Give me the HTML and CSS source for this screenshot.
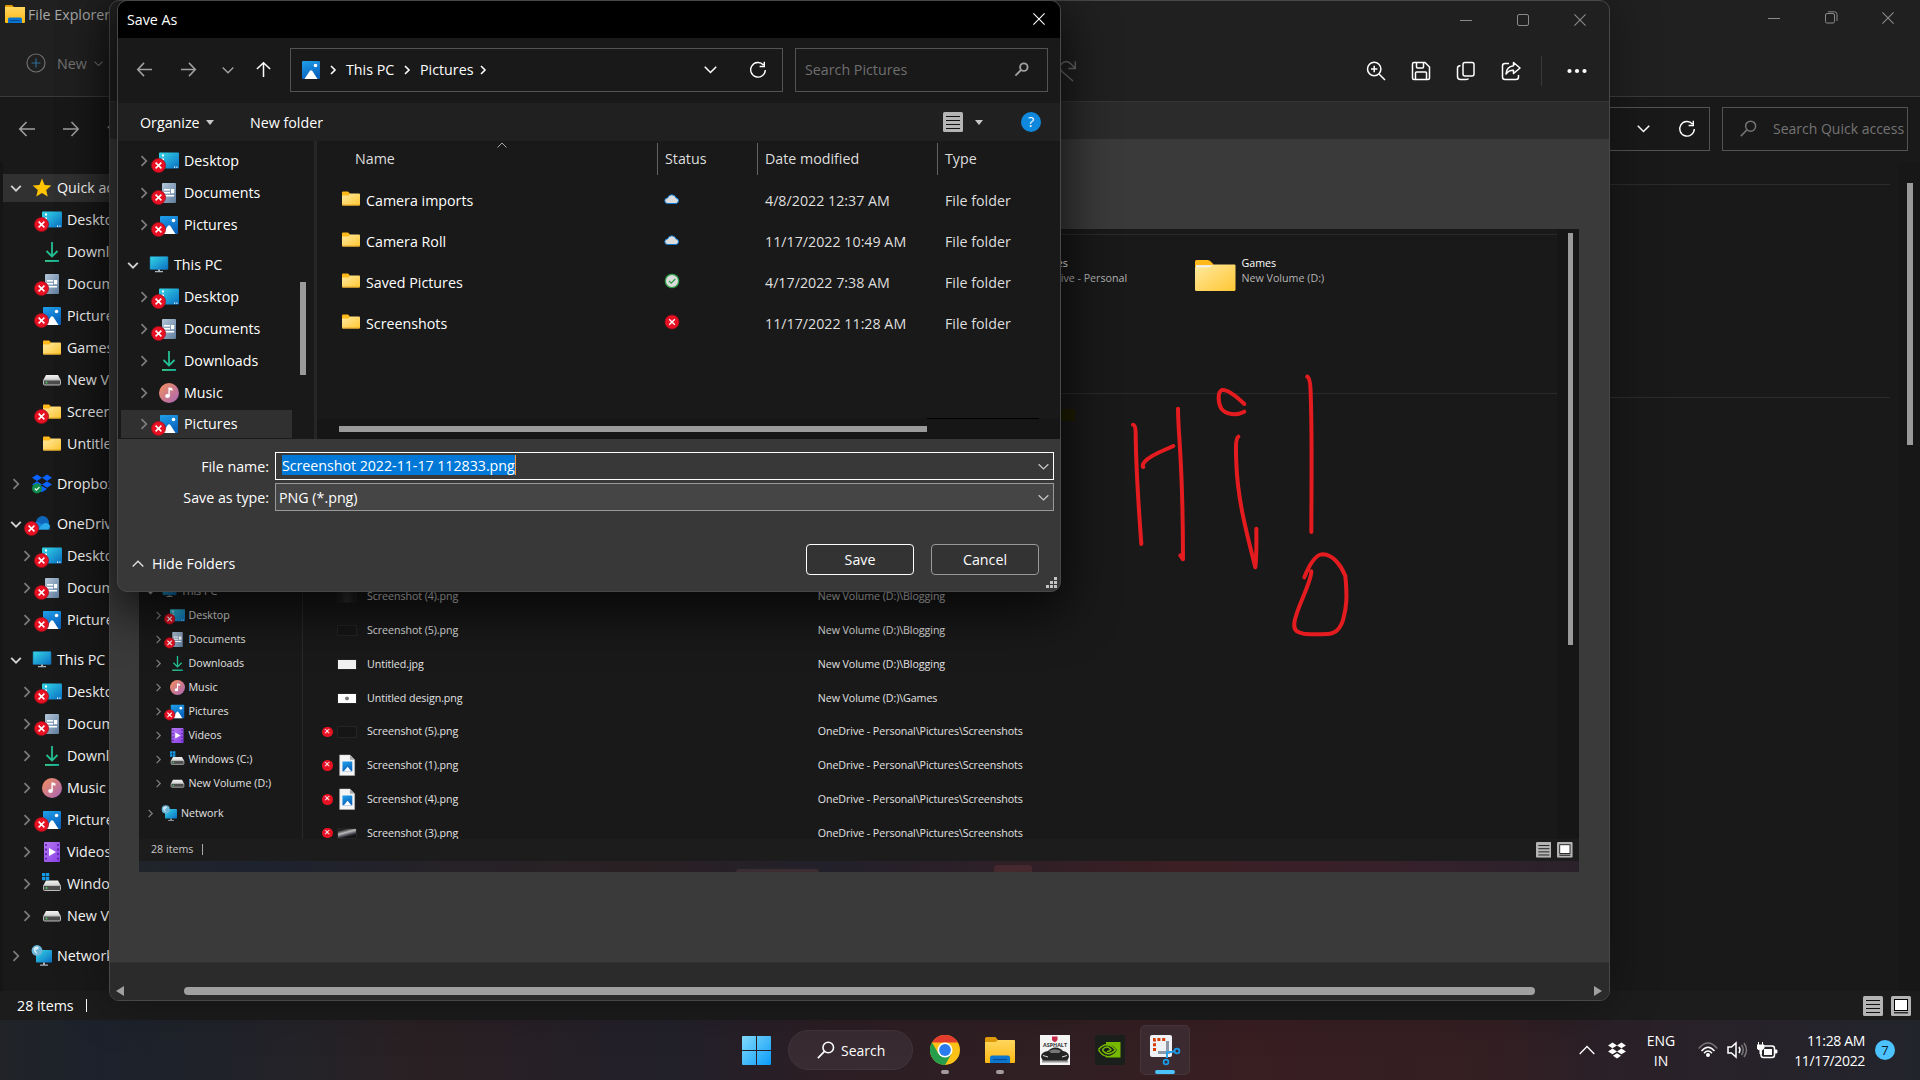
FILE: index.html
```html
<!DOCTYPE html>
<html lang="en">
<head>
<meta charset="utf-8">
<title>Save As</title>
<link rel="stylesheet" href="styles.css">
</head>
<body>
<svg class="defs" width="0" height="0">
  <defs>
    <linearGradient id="gBlue" x1="0" y1="0" x2="1" y2="1"><stop offset="0" stop-color="#35d6e6"/><stop offset="1" stop-color="#0a6fc4"/></linearGradient>
    <linearGradient id="gPic" x1="0" y1="0" x2="0.4" y2="1"><stop offset="0" stop-color="#1fa0ea"/><stop offset="1" stop-color="#0a63bd"/></linearGradient>
    <linearGradient id="gFold" x1="0" y1="0" x2="1" y2="1"><stop offset="0" stop-color="#ffe9a0"/><stop offset="1" stop-color="#ffc733"/></linearGradient>
    <linearGradient id="gDoc" x1="0" y1="0" x2="1" y2="1"><stop offset="0" stop-color="#b4c6da"/><stop offset="1" stop-color="#5f7d9d"/></linearGradient>
    <linearGradient id="gMus" x1="0" y1="0" x2="1" y2="1"><stop offset="0" stop-color="#f5915c"/><stop offset="1" stop-color="#a765b8"/></linearGradient>
    <linearGradient id="gVid" x1="0" y1="0" x2="1" y2="1"><stop offset="0" stop-color="#b679f3"/><stop offset="1" stop-color="#8a3fe6"/></linearGradient>
    <linearGradient id="gWin" x1="0" y1="0" x2="1" y2="1"><stop offset="0" stop-color="#84dfff"/><stop offset="1" stop-color="#0a9af8"/></linearGradient>
    <linearGradient id="gDown" x1="0" y1="0" x2="1" y2="0"><stop offset="0" stop-color="#3bc98a"/><stop offset="1" stop-color="#12b39c"/></linearGradient>
    <linearGradient id="gExp" x1="0" y1="0" x2="0" y2="1"><stop offset="0" stop-color="#ffd75e"/><stop offset="1" stop-color="#fdb813"/></linearGradient>
    <linearGradient id="gDrv" x1="0" y1="0" x2="0" y2="1"><stop offset="0" stop-color="#f2f2f2"/><stop offset="1" stop-color="#cfcfcf"/></linearGradient>
  </defs>
  <symbol id="right" viewBox="0 0 12 12" overflow="visible"><path d="M3.5 1.2 8.3 6l-4.8 4.8" fill="none" stroke="#7f7f7f" stroke-width="1.7"/></symbol>
  <symbol id="down" viewBox="0 0 12 12" overflow="visible"><path d="M1.2 3.8 6 8.6l4.800-4.800" fill="none" stroke="#d0d0d0" stroke-width="1.9"/></symbol>
  <symbol id="err" viewBox="0 0 20 20" overflow="visible"><circle cx="-.5" cy="14.5" r="7" fill="#e81123" stroke="#9c0c1c" stroke-width=".8"/><path d="m-3.400 11.600 5.800 5.800m0-5.800-5.800 5.800" stroke="#fff" stroke-width="1.500"/></symbol>
  <symbol id="desktop" viewBox="0 0 20 20" overflow="visible"><rect y="1.500" width="20" height="16" rx="1" fill="url(#gBlue)"/><path d="M3 3.500h2v2H3zm0 4h2v2H3z" fill="#fff"/><path d="M15 15.500h1.200v1.200H15zm2.300 0h1.200v1.200h-1.200z" fill="#fff"/></symbol>
  <symbol id="docs" viewBox="0 0 20 20"><rect x="3" width="14" height="20" rx="1" fill="url(#gDoc)"/><path d="M5 6h6v1.400H5zm0 3h6v1.400H5zm0 3h10v1.400H5z" fill="#fff"/><path d="M12 6h3.200v4.200H12z" fill="#fff"/></symbol>
  <symbol id="pics" viewBox="0 0 20 20"><rect x="1" y="1" width="18" height="18" rx="1" fill="url(#gPic)"/><path d="m3.500 19 5.400-8.200q1.100-1.300 2.300 0L16.500 19z" fill="#fff"/><circle cx="14.500" cy="5.500" r="1.800" fill="#fff"/></symbol>
  <symbol id="dl" viewBox="0 0 20 20"><path d="M10 0v13M4.500 9 10 14.500 15.500 9" fill="none" stroke="#23bf93" stroke-width="1.800"/><path d="M3 18h14v1.900H3z" fill="url(#gDown)"/></symbol>
  <symbol id="music" viewBox="0 0 20 20"><circle cx="10" cy="10" r="10" fill="url(#gMus)"/><ellipse cx="8.500" cy="13" rx="2.300" ry="2" fill="#fff"/><path d="M9.400 13V4.500h1.300q1 0 2.800 1v2.300l-2.700-.8v6z" fill="#fff"/></symbol>
  <symbol id="video" viewBox="0 0 20 20"><rect x="2" width="16" height="20" rx="1" fill="url(#gVid)"/><path d="M7 6v8l7-4z" fill="#fff"/><path d="M4 2v17M16 2v17" stroke="#4c1c96" stroke-width="1.600" stroke-dasharray="1.800 2.800"/></symbol>
  <symbol id="folder" viewBox="0 0 20 20"><path d="M1 3.500q0-1 1-1h5l2 2V8H1z" fill="#ffb91a"/><path d="M1 6.500h6.500l1.700-2H18q1 0 1 1v10q0 1-1 1H2q-1 0-1-1z" fill="url(#gFold)"/><path d="M1 15.500h18q0 1-1 1H2q-1 0-1-1z" fill="#e8a824"/></symbol>
  <symbol id="drive" viewBox="0 0 20 20"><path d="M4 5h12l3 5.500H1z" fill="url(#gDrv)"/><rect x="1.500" y="10" width="17" height="5" rx="1" fill="#4c4c4c" stroke="#bdbdbd"/><circle cx="4.500" cy="12.500" r=".9" fill="#3ddc5a"/></symbol>
  <symbol id="windrive" viewBox="0 0 20 20" overflow="visible"><use href="#drive" y="1.500"/><path d="M0-1h3.300v3.300H0zm3.900 0h3.300v3.300H3.900zM0 2.900h3.300v3.300H0zm3.900 0h3.300v3.300H3.900z" fill="#149ae8"/></symbol>
  <symbol id="pc" viewBox="0 0 20 20"><rect x="1" y="1.500" width="18" height="13" rx=".8" fill="url(#gBlue)" stroke="#1c6f9f" stroke-width=".6"/><path d="M9 14.500h2v1.500h3v1.300H6V16h3z" fill="#a9b4bd"/></symbol>
  <symbol id="net" viewBox="0 0 20 20" overflow="visible"><rect x="4" y="4" width="16" height="12.500" rx=".8" fill="url(#gBlue)"/><path d="M11 16.500h2v2h3v1.300H8v-1.300h3z" fill="#a9b4bd"/><circle cx="5" cy="4.500" r="5.400" fill="#6db5d8"/><path d="M1.500 2.500Q5-1 7 2L4.500 4 3 3.500 5.500 8Q2 7 1.500 2.500z" fill="#d6eef8"/></symbol>
  <symbol id="star" viewBox="0 0 20 20"><path d="m10 .6 2.600 6.300 6.700.6-5.100 4.400 1.500 6.600L10 15l-5.700 3.500 1.500-6.600L.7 7.500l6.700-.6z" fill="#ffc300"/></symbol>
  <symbol id="dbx" viewBox="0 0 20 20"><path d="M5 0.500 10 3.800 5 7 0 3.800zM15 .5l5 3.300L15 7l-5-3.200zM5 7.300l5 3.200-5 3.300-5-3.300zM15 7.300l5 3.200-5 3.300-5-3.300zM10 12l5 3-5 3.300L5 15z" fill="#0a62ff"/></symbol>
  <symbol id="okb" viewBox="0 0 20 20"><circle cx="5" cy="14.500" r="5" fill="#0f8b4c"/><path d="m2.800 14.500 1.600 1.600 3-3" fill="none" stroke="#fff" stroke-width="1.200"/></symbol>
  <symbol id="od" viewBox="0 0 20 20"><circle cx="10.500" cy="8.500" r="6.500" fill="#0f66b8"/><path d="M1 15.500a4 4 0 0 1 1-6.500 5 5 0 0 1 5-.5l12 7z" fill="#1583d8"/><path d="M6 15.500 11 10a5 5 0 0 1 5-.6 3.300 3.300 0 0 1 0 6.100z" fill="#29a8ea"/></symbol>
  <symbol id="refresh" viewBox="0 0 20 20"><path d="M15.500 5A7.300 7.300 0 1 0 17.300 10M16.300 1.800v4.700h-4.700" fill="none" stroke="currentColor" stroke-width="1.400"/></symbol>
  <symbol id="back" viewBox="0 0 18 18"><path d="M17 9H2m6.500-7L1.800 9l6.700 7" fill="none" stroke="currentColor" stroke-width="1.600"/></symbol>
  <symbol id="chev" viewBox="0 0 12 12"><path d="m.7 3.500 5.300 5.200 5.300-5.200" fill="none" stroke="currentColor" stroke-width="1.400"/></symbol>
  <symbol id="mag" viewBox="0 0 16 16"><circle cx="10" cy="5.800" r="4.700" fill="none" stroke="currentColor" stroke-width="1.400"/><path d="m6.600 9.200-5.800 6" stroke="currentColor" stroke-width="1.500"/></symbol>
  <symbol id="magb" viewBox="0 0 16 16"><circle cx="10.500" cy="5.500" r="4" fill="none" stroke="currentColor" stroke-width="2"/><path d="m7.500 8.500-6 6" stroke="currentColor" stroke-width="2"/></symbol>
  <symbol id="listv" viewBox="0 0 20 20"><rect width="20" height="20" rx="1.500" fill="#b4b4b4"/><path d="M3 4.500h14M3 8.500h14M3 12.500h14M3 16.500h14" stroke="#111" stroke-width="1.100"/></symbol>
  <symbol id="bigv" viewBox="0 0 20 20"><rect width="20" height="20" rx="1.500" fill="#b4b4b4"/><rect x="3.500" y="3.500" width="13" height="11" fill="#fff" stroke="#000"/><path d="M3 16.800h14" stroke="#000" stroke-width="1.100"/></symbol>
  <symbol id="x" viewBox="0 0 12 12"><path d="m.4.400 11.200 11.200m0-11.200L.4 11.600" stroke="currentColor" stroke-width="1.100"/></symbol>
  <symbol id="cloud" viewBox="0 0 16 16"><path d="M3.500 12.500a2.800 2.800 0 0 1 .2-5.600 4.300 4.300 0 0 1 8.200-.1 2.900 2.900 0 0 1 .4 5.700z" fill="#dcdcdc" stroke="#0a78d6"/></symbol>
  <symbol id="pngf" viewBox="0 0 20 24"><path d="M2 1h11l5 5v17H2z" fill="#f5f5f5" stroke="#bbb" stroke-width=".5"/><path d="M13 1v5h5z" fill="#aaa"/><rect x="5" y="8" width="10.500" height="10.500" fill="url(#gPic)"/><path d="m6.500 18.500 4-5 4 5z" fill="#fff"/></symbol>
</svg>

<main class="desk">
  <section class="explorer">
    <header class="ex-top">
      <div class="ex-title">
        <svg width="20" height="20" viewBox="0 0 20 20"><path d="M0 2q0-1 1-1h6l2 2H0z" fill="#e09c00"/><path d="M0 3h20v15q0 1-1 1H1q-1 0-1-1z" fill="url(#gExp)"/><path d="M3 19v-4q0-1.500 1.500-1.500h11Q17 13.500 17 15v4z" fill="#0a75cf"/><path d="M5 16.500h10" stroke="#0a4a92"/></svg>
        <span>File Explorer</span>
        <div class="wctl ex-wctl">
          <svg width="12" height="12"><path d="M0 6.500h12" stroke="currentColor"/></svg>
          <svg width="13" height="13"><rect x=".5" y="2.500" width="9" height="9.500" rx="1.500" fill="none" stroke="currentColor"/><path d="M3 .8h6.500q2.500 0 2.500 2.500V10" fill="none" stroke="currentColor"/></svg>
          <svg width="12" height="12"><use href="#x"/></svg>
        </div>
      </div>
      <div class="ex-new">
        <svg width="20" height="20"><circle cx="10" cy="10" r="9" fill="none" stroke="#6f6f6f" stroke-width="1.200"/><path d="M10 5.500v9M5.500 10h9" stroke="#2f6d94" stroke-width="1.200"/></svg>
        <span>New</span>
        <svg width="9" height="9"><use href="#chev"/></svg>
      </div>
    </header>
    <div class="ex-nav">
      <svg class="g" width="18" height="18"><use href="#back"/></svg>
      <svg class="g flip" width="18" height="18"><use href="#back"/></svg>
      <svg class="g" width="12" height="12"><use href="#chev"/></svg>
      <div class="box ex-addr"><svg width="13" height="13"><use href="#chev"/></svg><svg width="20" height="20"><use href="#refresh"/></svg></div>
      <div class="box ex-search"><svg width="17" height="17"><use href="#mag"/></svg><span>Search Quick access</span></div>
    </div>
    <div class="ex-body">
      <nav class="tree ex-tree">
        <div class="row head sel"><svg class="ch"><use href="#down"/></svg><svg class="ic"><use href="#star"/></svg>Quick access</div>
        <div class="row"><i class="ch"></i><svg class="ic"><use href="#desktop"/><use href="#err"/></svg>Desktop</div>
        <div class="row"><i class="ch"></i><svg class="ic"><use href="#dl"/></svg>Downloads</div>
        <div class="row"><i class="ch"></i><svg class="ic"><use href="#docs"/><use href="#err"/></svg>Documents</div>
        <div class="row"><i class="ch"></i><svg class="ic"><use href="#pics"/><use href="#err"/></svg>Pictures</div>
        <div class="row"><i class="ch"></i><svg class="ic"><use href="#folder"/></svg>Games</div>
        <div class="row"><i class="ch"></i><svg class="ic"><use href="#drive"/></svg>New Volume (D:)</div>
        <div class="row"><i class="ch"></i><svg class="ic"><use href="#folder"/><use href="#err"/></svg>Screenshots</div>
        <div class="row"><i class="ch"></i><svg class="ic"><use href="#folder"/></svg>Untitled</div>
        <div class="row head"><svg class="ch"><use href="#right"/></svg><svg class="ic"><use href="#dbx"/><use href="#okb"/></svg>Dropbox</div>
        <div class="row head"><svg class="ch"><use href="#down"/></svg><svg class="ic"><use href="#od"/><use href="#err"/></svg>OneDrive</div>
        <div class="row"><svg class="ch"><use href="#right"/></svg><svg class="ic"><use href="#desktop"/><use href="#err"/></svg>Desktop</div>
        <div class="row"><svg class="ch"><use href="#right"/></svg><svg class="ic"><use href="#docs"/><use href="#err"/></svg>Documents</div>
        <div class="row"><svg class="ch"><use href="#right"/></svg><svg class="ic"><use href="#pics"/><use href="#err"/></svg>Pictures</div>
        <div class="row head"><svg class="ch"><use href="#down"/></svg><svg class="ic"><use href="#pc"/></svg>This PC</div>
        <div class="row"><svg class="ch"><use href="#right"/></svg><svg class="ic"><use href="#desktop"/><use href="#err"/></svg>Desktop</div>
        <div class="row"><svg class="ch"><use href="#right"/></svg><svg class="ic"><use href="#docs"/><use href="#err"/></svg>Documents</div>
        <div class="row"><svg class="ch"><use href="#right"/></svg><svg class="ic"><use href="#dl"/></svg>Downloads</div>
        <div class="row"><svg class="ch"><use href="#right"/></svg><svg class="ic"><use href="#music"/></svg>Music</div>
        <div class="row"><svg class="ch"><use href="#right"/></svg><svg class="ic"><use href="#pics"/><use href="#err"/></svg>Pictures</div>
        <div class="row"><svg class="ch"><use href="#right"/></svg><svg class="ic"><use href="#video"/></svg>Videos</div>
        <div class="row"><svg class="ch"><use href="#right"/></svg><svg class="ic"><use href="#windrive"/></svg>Windows (C:)</div>
        <div class="row"><svg class="ch"><use href="#right"/></svg><svg class="ic"><use href="#drive"/></svg>New Volume (D:)</div>
        <div class="row head"><svg class="ch"><use href="#right"/></svg><svg class="ic"><use href="#net"/></svg>Network</div>
      </nav>
      <div class="ex-main"><hr><hr></div>
      <div class="ex-scroll"><i></i></div>
    </div>
    <footer class="status"><span>28 items</span><i></i><div class="views"><svg width="20" height="20"><use href="#listv"/></svg><svg width="20" height="20"><use href="#bigv"/></svg></div></footer>
  </section>

  <section class="snip">
    <header class="sn-top">
      <div class="wctl sn-wctl">
        <svg width="12" height="12"><path d="M0 6.500h12" stroke="currentColor"/></svg>
        <svg width="12" height="12"><rect x=".5" y=".5" width="11" height="11" rx="1.500" fill="none" stroke="currentColor"/></svg>
        <svg width="12" height="12"><use href="#x"/></svg>
      </div>
      <div class="sn-tools">
        <svg class="redo" width="22" height="22" viewBox="0 0 22 22"><path d="M17 21 6 11.500Q2 7 6 3.500q4-4 8.500 0L19 8M19.300 1.500v7h-7" fill="none" stroke="#6a6a6a" stroke-width="1.400"/></svg>
        <svg width="20" height="20" fill="none" stroke="#fff" stroke-width="1.500"><circle cx="8.200" cy="8" r="6.700"/><path d="m13 13 6 6M8.200 4.800v6.400M5 8h6.400"/></svg>
        <svg width="20" height="20" fill="none" stroke="#fff" stroke-width="1.500"><path d="M3 1.500h11L18.500 6v11q0 1.500-1.500 1.500H3q-1.500 0-1.500-1.500V3Q1.500 1.500 3 1.500zM5.500 1.500V6q0 1 1 1h5q1 0 1-1V1.500M4.500 18.500V12q0-1 1-1h9q1 0 1 1v6.500"/></svg>
        <svg width="20" height="20" fill="none" stroke="#fff" stroke-width="1.500"><rect x="7" y="1.500" width="11" height="13.500" rx="2"/><path d="M4.500 4.500Q1.500 5 1.500 7v8.500q0 3 3 3H10q2 0 2.500-1"/></svg>
        <svg width="20" height="20" fill="none" stroke="#fff" stroke-width="1.500" stroke-linejoin="round"><path d="M8 2.500H4Q1.500 2.500 1.500 5v11q0 2.500 2.500 2.500h11q2.500 0 2.500-2.500v-2"/><path d="M12.500 1.500 19 7l-6.500 5.500V9.300Q8 9 5 13q.5-7.500 7.500-8.300z"/></svg>
        <i></i>
        <svg width="20" height="20" fill="#fff"><circle cx="2.500" cy="10" r="2.100"/><circle cx="10" cy="10" r="2.100"/><circle cx="17.500" cy="10" r="2.100"/></svg>
      </div>
    </header>
    <div class="sn-strip"></div>
    <div class="sn-canvas">
      <div class="shot">
        <div class="sh-main">
          <nav class="tree sh-tree">
            <div class="row head"><svg class="ch"><use href="#down"/></svg><svg class="ic"><use href="#pc"/></svg>This PC</div>
            <div class="row"><svg class="ch"><use href="#right"/></svg><svg class="ic"><use href="#desktop"/><use href="#err"/></svg>Desktop</div>
            <div class="row"><svg class="ch"><use href="#right"/></svg><svg class="ic"><use href="#docs"/><use href="#err"/></svg>Documents</div>
            <div class="row"><svg class="ch"><use href="#right"/></svg><svg class="ic"><use href="#dl"/></svg>Downloads</div>
            <div class="row"><svg class="ch"><use href="#right"/></svg><svg class="ic"><use href="#music"/></svg>Music</div>
            <div class="row"><svg class="ch"><use href="#right"/></svg><svg class="ic"><use href="#pics"/><use href="#err"/></svg>Pictures</div>
            <div class="row"><svg class="ch"><use href="#right"/></svg><svg class="ic"><use href="#video"/></svg>Videos</div>
            <div class="row"><svg class="ch"><use href="#right"/></svg><svg class="ic"><use href="#windrive"/></svg>Windows (C:)</div>
            <div class="row"><svg class="ch"><use href="#right"/></svg><svg class="ic"><use href="#drive"/></svg>New Volume (D:)</div>
            <div class="row head"><svg class="ch"><use href="#right"/></svg><svg class="ic"><use href="#net"/></svg>Network</div>
          </nav>
          <div class="sh-content">
            <div class="tiles">
              <div class="tile"><svg width="54" height="42" viewBox="0 0 40 31"><use href="#pics"/></svg><p><b>Pictures</b><br>OneDrive - Personal</p></div>
              <div class="tile"><svg width="54" height="42" viewBox="0 0 40 31"><path d="M0 1.500Q0 0 1.500 0h11q2 0 3 1.500L18 4v6H0z" fill="#ffb91a"/><path d="M1 5h17v4H1z" fill="#f1f1f1"/><path d="M0 7h15l3-2.700h21q1 0 1 1V29q0 1.500-1.500 1.500h-37Q0 30.500 0 29z" fill="url(#gFold)"/></svg><p><b>Games</b><br>New Volume (D:)</p></div>
            </div>
            <div class="mark"></div>
            <div class="files">
              <div class="file"><i></i><span class="th t4"></span><span>Screenshot (4).png</span><span>New Volume (D:)\Blogging</span></div>
              <div class="file"><i></i><span class="th"></span><span>Screenshot (5).png</span><span>New Volume (D:)\Blogging</span></div>
              <div class="file"><i></i><span class="th w"></span><span>Untitled.jpg</span><span>New Volume (D:)\Blogging</span></div>
              <div class="file"><i></i><span class="th w dot"></span><span>Untitled design.png</span><span>New Volume (D:)\Games</span></div>
              <div class="file"><i class="e">×</i><span class="th"></span><span>Screenshot (5).png</span><span>OneDrive - Personal\Pictures\Screenshots</span></div>
              <div class="file"><i class="e">×</i><svg width="27" height="30" viewBox="0 0 20 24"><use href="#pngf"/></svg><span>Screenshot (1).png</span><span>OneDrive - Personal\Pictures\Screenshots</span></div>
              <div class="file"><i class="e">×</i><svg width="27" height="30" viewBox="0 0 20 24"><use href="#pngf"/></svg><span>Screenshot (4).png</span><span>OneDrive - Personal\Pictures\Screenshots</span></div>
              <div class="file"><i class="e">×</i><span class="th car"></span><span>Screenshot (3).png</span><span>OneDrive - Personal\Pictures\Screenshots</span></div>
            </div>
          </div>
          <div class="sh-scroll"><i></i></div>
        </div>
        <footer class="status sh-status"><span>28 items</span><i></i><div class="views"><svg width="21" height="21"><use href="#listv"/></svg><svg width="21" height="21"><use href="#bigv"/></svg></div></footer>
        <div class="sh-task"><i></i><i></i></div>
      </div>
      <svg class="ink" width="220" height="270" viewBox="150 450 660 810" fill="none" stroke="#e51c1f" stroke-width="12" stroke-linecap="round" stroke-linejoin="round">
        <path d="M159 614Q167 616 167 640C168 760 176 860 184 972"/>
        <path d="M190 741Q184 736 196 723C220 700 250 693 280 678"/>
        <path d="M294 566C295 660 309 720 309 1018L301 1006"/>
        <path d="M493 552C460 520 438 508 426 510C412 516 414 550 424 566C438 585 470 587 493 575"/>
        <path d="M475 650C465 655 468 700 469 730C473 840 500 940 526 1042Q530 1010 529 926"/>
        <path d="M682 470Q691 474 692 520C697 660 694 800 694 936"/>
        <path d="M673 1072C690 1030 708 1003 728 1003C762 1004 785 1040 796 1068C802 1130 800 1160 790 1196C782 1226 768 1241 742 1242Q700 1244 670 1241C646 1236 641 1228 643 1208C650 1160 694 1090 694 1054"/>
      </svg>
    </div>
    <footer class="sn-foot">
      <svg width="8" height="10"><path d="M8 0v10L0 5z" fill="#a0a0a0"/></svg><i></i><svg width="8" height="10"><path d="M0 0v10l8-5z" fill="#a0a0a0"/></svg>
    </footer>
  </section>

  <section class="dialog">
    <header class="dg-title"><span>Save As</span><svg width="12" height="12"><use href="#x"/></svg></header>
    <div class="dg-nav">
      <svg class="g" width="17" height="17"><use href="#back"/></svg>
      <svg class="g flip" width="17" height="17"><use href="#back"/></svg>
      <svg class="g" width="12" height="12"><use href="#chev"/></svg>
      <svg class="up" width="17" height="17"><use href="#back"/></svg>
      <div class="box dg-addr">
        <svg width="20" height="20"><use href="#pics"/></svg>
        <svg class="sep" width="8" height="10"><path d="m2 1 4 4-4 4" fill="none" stroke="#fff" stroke-width="1.600"/></svg>
        <span class="c1">This PC</span>
        <svg class="sep" width="8" height="10"><path d="m2 1 4 4-4 4" fill="none" stroke="#fff" stroke-width="1.600"/></svg>
        <span class="c2">Pictures</span>
        <svg class="sep" width="8" height="10"><path d="m2 1 4 4-4 4" fill="none" stroke="#fff" stroke-width="1.600"/></svg>
        <svg class="dd" width="13" height="13"><use href="#chev"/></svg>
        <svg class="rf" width="20" height="20"><use href="#refresh"/></svg>
      </div>
      <div class="box dg-search"><span>Search Pictures</span><svg width="15" height="15"><use href="#magb"/></svg></div>
    </div>
    <div class="dg-cmd">
      <span class="org">Organize</span><i class="caret"></i><span class="nf">New folder</span>
      <svg class="lv" width="20" height="20"><use href="#listv"/></svg><i class="caret"></i><span class="help">?</span>
    </div>
    <div class="dg-body">
      <nav class="tree dg-tree">
        <div class="row"><svg class="ch"><use href="#right"/></svg><svg class="ic"><use href="#desktop"/><use href="#err"/></svg>Desktop</div>
        <div class="row"><svg class="ch"><use href="#right"/></svg><svg class="ic"><use href="#docs"/><use href="#err"/></svg>Documents</div>
        <div class="row"><svg class="ch"><use href="#right"/></svg><svg class="ic"><use href="#pics"/><use href="#err"/></svg>Pictures</div>
        <div class="row head"><svg class="ch"><use href="#down"/></svg><svg class="ic"><use href="#pc"/></svg>This PC</div>
        <div class="row"><svg class="ch"><use href="#right"/></svg><svg class="ic"><use href="#desktop"/><use href="#err"/></svg>Desktop</div>
        <div class="row"><svg class="ch"><use href="#right"/></svg><svg class="ic"><use href="#docs"/><use href="#err"/></svg>Documents</div>
        <div class="row"><svg class="ch"><use href="#right"/></svg><svg class="ic"><use href="#dl"/></svg>Downloads</div>
        <div class="row"><svg class="ch"><use href="#right"/></svg><svg class="ic"><use href="#music"/></svg>Music</div>
        <div class="row sel"><svg class="ch"><use href="#right"/></svg><svg class="ic"><use href="#pics"/><use href="#err"/></svg>Pictures</div>
      </nav>
      <div class="dg-vscroll"><i></i></div>
      <div class="dg-list">
        <div class="cols"><span>Name<svg class="sort" width="10" height="6"><path d="m.5 5.500 4.500-4.500 4.500 4.500" fill="none" stroke="#aaa"/></svg></span><span>Status</span><span>Date modified</span><span>Type</span></div>
        <div class="item"><span><svg width="20" height="20"><use href="#folder"/></svg>Camera imports</span><span><svg width="16" height="16"><use href="#cloud"/></svg></span><span>4/8/2022 12:37 AM</span><span>File folder</span></div>
        <div class="item"><span><svg width="20" height="20"><use href="#folder"/></svg>Camera Roll</span><span><svg width="16" height="16"><use href="#cloud"/></svg></span><span>11/17/2022 10:49 AM</span><span>File folder</span></div>
        <div class="item"><span><svg width="20" height="20"><use href="#folder"/></svg>Saved Pictures</span><span><svg width="16" height="16"><circle cx="8" cy="8" r="6.700" fill="#dcdcdc" stroke="#2f9c46" stroke-width="1.300"/><path d="m5 8 2.200 2.200L11.300 6" fill="none" stroke="#2f9c46" stroke-width="1.300"/></svg></span><span>4/17/2022 7:38 AM</span><span>File folder</span></div>
        <div class="item"><span><svg width="20" height="20"><use href="#folder"/></svg>Screenshots</span><span><svg width="16" height="16"><circle cx="8" cy="8" r="7" fill="#e81123" stroke="#9c0c1c" stroke-width=".8"/><path d="m5.200 5.200 5.600 5.600m0-5.600-5.600 5.600" stroke="#fff" stroke-width="1.400"/></svg></span><span>11/17/2022 11:28 AM</span><span>File folder</span></div>
        <div class="dg-hscroll"><i></i><b></b></div>
      </div>
    </div>
    <div class="dg-form">
      <label>File name:</label><div class="field name"><mark>Screenshot 2022-11-17 112833.png</mark><svg width="11" height="11"><use href="#chev"/></svg></div>
      <label>Save as type:</label><div class="field type"><span>PNG (*.png)</span><svg width="11" height="11"><use href="#chev"/></svg></div>
    </div>
    <footer class="dg-foot">
      <svg class="hide" width="12" height="12"><use href="#chev"/></svg><span>Hide Folders</span>
      <button class="btn save">Save</button><button class="btn">Cancel</button>
    </footer>
    <svg class="grip" width="11" height="11" fill="#c4c4c4"><path d="M8 0h3v3H8zM4 4h3v3H4zM8 4h3v3H8zM0 8h3v3H0zM4 8h3v3H4zM8 8h3v3H8z"/></svg>
  </section>

  <footer class="taskbar">
    <div class="apps">
      <svg class="start" width="29" height="29"><path d="M0 1q0-1 1-1h13v14H0zM15 0h13q1 0 1 1v13H15zM0 15h14v14H1q-1 0-1-1zM15 15h14v13q0 1-1 1H15z" fill="url(#gWin)"/></svg>
      <div class="pill"><svg width="18" height="18"><use href="#mag"/></svg><span>Search</span></div>
      <div class="app run"><svg width="30" height="30" viewBox="-15 -15 30 30"><circle r="15" fill="#fbc116"/><path d="M0-7.500H13A15 15 0 0 0-13-7.500z" fill="#e33b2e"/><path d="M-13-7.500A15 15 0 0 0 0 15L6.500 3.700-6.500 3.700z" fill="#259d4b"/><circle r="7.500" fill="#fff"/><circle r="5.900" fill="#2a7bee"/></svg></div>
      <div class="app run"><svg width="30" height="28" viewBox="0 0 30 28"><path d="M0 2.500Q0 1 1.500 1h9L13 4v3H0z" fill="#dd9a08"/><path d="M0 6h10.500L13 4h16q1 0 1 1v21q0 1-1 1H1q-1 0-1-1z" fill="url(#gExp)"/><path d="M5 27v-5.500q0-2 2-2h16q2 0 2 2V27z" fill="#0b78d0"/><path d="M8 23.500h14" stroke="#0a4a92" stroke-width="1.200"/></svg></div>
      <div class="app"><svg width="30" height="30" viewBox="0 0 30 30"><path d="M0 0h30v30H0z" fill="#f4f4f4"/><path d="M12 1.500h5.500v3.500q-1 1.500-2.700 2.200Q13 6.500 12 5z" fill="#c32a45"/><text x="15" y="11.500" text-anchor="middle" font-size="5.200" font-weight="700" textLength="24" lengthAdjust="spacingAndGlyphs" fill="#333">ASPHALT</text><path d="M1 22q0-5 7-6 3-3.500 7.500-3.500T23 16q6 1 6 6l-2 4H3z" fill="#242424"/><path d="M9 16q6-3.500 12 0l-2 2h-8z" fill="#777"/><path d="M3 20.500l5 1.500M27 20.500l-5 1.500" stroke="#ddd"/><path d="M2 26.500h26" stroke="#999" stroke-width="2"/></svg></div>
      <div class="app"><svg width="30" height="30" viewBox="0 0 30 30"><path d="M0 0h30v30H0z" fill="#1b1f1b"/><path d="M11 7h14.500v15.500H11z" fill="#76b900"/><path d="M3.500 14.500Q10 6.500 18 11l4 4q-4 6-10 6-6-1-8.500-6.500z" fill="#1b1f1b"/><path d="M3.500 14.500Q10 7 17 11.500l3.500 3.500Q16 19.500 12 18.500q-4-1.500-4.500-4 3-3.500 6-2.200l2.500 2.500q-2 2.200-4 1.400M3.500 14.500Q6 20 12 21.500" fill="none" stroke="#76b900" stroke-width="1.500"/></svg></div>
      <div class="app run active"><svg width="30" height="30" viewBox="0 0 30 30" overflow="visible"><rect width="22" height="22" rx="2" fill="#eef1f5"/><path d="M4.500 16V4.500H17" fill="none" stroke="#d83b01" stroke-width="3" stroke-dasharray="3 1.800"/><path d="M17.500 6v13M8 17.500h12" stroke="#8d99a6" stroke-width="3"/><path d="M16 17h6l3-1M17 18v5" stroke="#2aa0e6" stroke-width="2"/><circle cx="27" cy="16" r="2.400" fill="none" stroke="#1c9be8" stroke-width="1.800"/><circle cx="16" cy="27" r="2.400" fill="none" stroke="#1c9be8" stroke-width="1.800"/></svg></div>
    </div>
    <div class="tray">
      <svg width="16" height="10"><path d="m.7 9 7.300-7.500L15.300 9" fill="none" stroke="#fff" stroke-width="1.300"/></svg>
      <svg class="tdbx" width="18" height="17" viewBox="0 0 20 19"><path d="M5 .5l5 3.300L5 7 0 3.800zM15 .5l5 3.300L15 7l-5-3.200zM5 7.300l5 3.200-5 3.300-5-3.300zM15 7.300l5 3.200-5 3.300-5-3.300zM10 12.500l4.500 2.900-4.500 3-4.500-3z" fill="#fff"/></svg>
      <div class="lang">ENG<br>IN</div>
      <svg class="wifi" width="20" height="16" fill="none" stroke-width="1.400"><path d="M.7 6.500Q10-4.500 19.300 6.500" stroke="#777"/><path d="M3.500 9Q10 1.500 16.500 9M6 11.200q4-4.500 8 0" stroke="#fff"/><circle cx="10" cy="13" r="2" fill="#fff"/></svg>
      <svg class="snd" width="21" height="18" fill="none" stroke-width="1.500"><path d="M1 6h3.500L9 2v14l-4.500-4H1z" stroke="#fff"/><path d="M12 6q2 3 0 6" stroke="#fff"/><path d="M14.500 4q3.500 5 0 10M17 2q5 7 0 14" stroke="#777"/></svg>
      <svg class="bat" width="21" height="17"><rect x="4" y="4" width="13.500" height="11.500" rx="2.500" fill="none" stroke="#fff" stroke-width="1.500"/><path d="M7 7h8v6H7zM18 7.500h1.500q1 0 1 2t-1 2H18z" fill="#fff"/><path d="M1.500 0v3M5.500 0v3M0 3h7v3Q6.500 8 3.500 8T0 6zM3 8h1.300v4H3z" fill="#fff" stroke="#fff"/></svg>
      <div class="clock">11:28 AM<br>11/17/2022</div>
      <span class="note">7</span>
    </div>
  </footer>
</main>
</body>
</html>
```
FILE: styles.css
```css
* { box-sizing: border-box; }
body { margin: 0; background: #191919; color: #fff; font: 14.25px/20px "Open Sans", "Noto Sans", sans-serif; overflow: hidden; }
svg { display: block; flex: none; }
i { font-style: normal; }
.defs { position: absolute; }
.desk { position: relative; width: 1920px; height: 1080px; overflow: hidden; }
.g { color: #a0a0a0; }
.flip { transform: scaleX(-1); }
.box { display: flex; align-items: center; height: 44px; border: 1px solid #535353; white-space: nowrap; }
.wctl { display: flex; align-items: center; color: #8a8a8a; gap: 45px; }

/* folder trees */
.tree { overflow: hidden; white-space: nowrap; }
.row { display: flex; align-items: center; height: 32px; padding-left: 20px; }
.row.head { padding-left: 9px; margin-top: 8px; }
.ch { width: 12px; height: 12px; flex: none; }
.ic { width: 20px; height: 20px; margin: 0 5px 0 9px; overflow: visible; }
.head .ic { margin-left: 10px; }

/* status bars */
.status { display: flex; align-items: center; height: 29px; padding: 0 9px 0 17px; background: #1c1c1c; }
.status > i { width: 1px; height: 13px; margin-left: 12px; background: #fff; }
.views { display: flex; gap: 8px; margin-left: auto; }

/* explorer window */
.explorer { display: flex; flex-direction: column; height: 1020px; background: #191919; }
.ex-top { height: 97px; background: #202020; border-bottom: 1px solid #3b3b3b; }
.ex-title { display: flex; align-items: center; height: 30px; padding: 0 26px 0 5px; gap: 4px; color: #a8a8a8; }
.ex-title > svg { margin-top: -2px; }
.ex-title > span { margin-left: -1px; }
.ex-wctl { margin: 5px 0 0 auto; gap: 44.500px; }
.ex-new { display: flex; align-items: center; height: 66px; padding-left: 26px; color: #767676; }
.ex-new span { margin: 1px 7px 0 11px; }
.ex-nav { display: flex; align-items: center; height: 65px; padding: 0 12px 2px 18px; }
.ex-nav .flip { margin: 0 27px 0 26px; }
.ex-addr { flex: 1; margin: 0 12px 0 20px; justify-content: flex-end; gap: 27px; padding-right: 12px; }
.ex-search { width: 186px; padding-left: 17px; gap: 16px; color: #747474; overflow: hidden; font-size: 14px; }
.ex-body { display: flex; flex: 1; min-height: 0; }
.ex-tree { width: 109px; padding-top: 3px; border-left: 3px solid #151515; }
.ex-tree .row { margin-left: -2px; }
.ex-tree .sel { background: #313131; height: 28px; margin: 9px 0 2px; padding-left: 7px; }
.ex-main { flex: 1; }
.ex-main hr { margin: 22px 9px 0 0; border: 0; border-top: 1px solid #2b2b2b; }
.ex-main hr + hr { margin-top: 212px; }
.ex-scroll { width: 21px; background: #171717; padding: 21px 7px 0 8px; }
.ex-scroll i { display: block; height: 262px; background: #9a9a9a; }

/* snipping tool window */
.snip { position: absolute; left: 109px; top: 0; width: 1501px; height: 1001px; display: flex; flex-direction: column; background: #202020; border: 1px solid #484848; border-radius: 10px; overflow: hidden; box-shadow: 0 0 50px rgba(0,0,0,.35); }
.sn-top { height: 100px; }
.sn-wctl { height: 38px; justify-content: flex-end; padding-right: 23px; }
.sn-tools { display: flex; align-items: center; justify-content: flex-end; height: 64px; padding-right: 22px; gap: 25px; }
.sn-tools i { width: 1px; height: 30px; background: #383838; margin: 0 0 0 -5px; }
.redo { margin-right: 263px; }
.sn-strip { height: 38px; background: #2b2b2b; border-top: 1px solid #353535; }
.sn-canvas { position: relative; height: 823px; background: #3a3a3a; padding: 90px 29px; }
.ink { position: absolute; left: 1020px; top: 231px; }
.sn-foot { display: flex; align-items: center; flex: 1; padding: 18px 7px 0 6px; background: #2b2b2b; border-top: 1px solid #323232; }
.sn-foot i { flex: 1; height: 8px; margin: 0 59px 0 60px; border-radius: 4px; background: #a0a0a0; }

/* captured picture, shown at 75% */
.shot { zoom: .75; width: 1920px; height: 857px; display: flex; flex-direction: column; background: #191919; overflow: hidden; color: #e2e2e2; }
.sh-main { display: flex; height: 813px; overflow: hidden; }
.sh-tree { width: 219px; display: flex; flex-direction: column; justify-content: flex-end; padding-bottom: 18px; border-right: 2px solid #2a2a2a; }
.sh-tree .row { flex: none; }
.sh-content { flex: 1; display: flex; flex-direction: column; }
.tiles { display: grid; grid-template-columns: 282px 282px; height: 214px; margin: 6px 0 0; padding: 34px 0 0 907px; border: 1px solid #2a2a2a; border-width: 1px 0; }
.tile { display: flex; gap: 8px; }
.tile:first-child p { margin-left: -3px; }
.tile p { margin: -6px 0 0; line-height: 21px; color: #b4b4b4; }
.tile b { font-weight: 400; color: #fff; }
.mark { width: 60px; height: 16px; margin: 20px 0 0 969px; background: #1d1d00; }
.files { margin: auto 0 -15px; }
.file { display: grid; grid-template-columns: 16px 27px 576px 1fr; column-gap: 14px; align-items: center; height: 45px; padding-left: 25px; white-space: nowrap; letter-spacing: -.1px; }
.file > :nth-child(2) { margin-left: -10px; }
.file > :nth-child(3) { margin-left: -11px; }
.file .e { width: 14px; height: 14px; border-radius: 50%; background: #e81123; color: #fff; text-align: center; line-height: 13px; font-size: 14px; }
.th { width: 27px; height: 15px; background: #161616; border: 1px solid #242424; }
.t4 { background: linear-gradient(90deg, #1d1d1d, #333, #1d1d1d); }
.th.w { background: #f2f2f2; }
.th.dot { background: radial-gradient(circle, #777 0 2px, #fff 3px); }
.th.car { background: linear-gradient(165deg, #222 15%, #bbb 40%, #54505c 60%, #151515 75%); }
.sh-scroll { width: 30px; padding: 5px 8px 0 15px; background: #161616; }
.sh-scroll i { display: block; height: 549px; background: #9a9a9a; }
.sh-status { color: #c8c8c8; padding: 0 8px 0 16px; }
.sh-status > i { height: 14px; background: #aaa; }
.sh-task { flex: 1; display: flex; align-items: flex-end; background: linear-gradient(90deg, #20242a, #1d222f 8%, #252228 20%, #2a2024 35%, #22202a 48%, #3b1f24 72%, #38202a 85%, #2a222b); }
.sh-task i { width: 110px; height: 4px; margin-left: 796px; border-radius: 12px 12px 0 0; background: #3c2d33; }
.sh-task i + i { width: 51px; height: 9px; margin-left: 234px; border-radius: 5px 5px 0 0; background: #46292e; }

/* save dialog */
.dialog { position: absolute; left: 117px; top: 0; width: 944px; height: 592px; display: flex; flex-direction: column; background: #383838; border: 1px solid #484848; border-radius: 10px; overflow: hidden; box-shadow: 0 16px 50px 4px rgba(0,0,0,.7); }
.dg-title { display: flex; align-items: center; justify-content: space-between; height: 37px; padding: 0 15px 0 9px; background: #000; }
.dg-title svg { margin-top: -1px; }
.dg-nav { display: flex; align-items: center; height: 65px; padding: 0 0 2px 18px; background: #191919; }
.dg-nav .flip { margin: 0 25px 0 27px; }
.up { transform: rotate(90deg); margin: 0 18px 0 21px; }
.dg-addr { width: 493px; padding-left: 10px; }
.dg-addr .sep { margin: 0 9px 0 8px; }
.c1 { width: 49px; }
.c2 { width: 51px; }
.dd { margin-left: auto; }
.rf { margin: 0 14px 0 31px; }
.dg-search { width: 253px; margin-left: 12px; padding: 0 18px 0 9px; justify-content: space-between; color: #6f6f6f; }
.dg-search svg { color: #a0a0a0; }
.dg-cmd { display: flex; align-items: center; height: 38px; padding: 0 19px 0 22px; background: #202020; }
.org, .nf { padding-top: 1px; }
.org { width: 61px; }
.caret { border: 4px solid transparent; border-top: 5px solid #c8c8c8; border-bottom: 0; margin-left: 5px; }
.nf { margin-left: 36px; }
.lv { margin-left: auto; }
.lv + .caret { margin-left: 12px; }
.help { width: 20px; height: 20px; margin-left: 38px; border-radius: 50%; background: #0f88de; text-align: center; }
.dg-body { display: flex; height: 298px; background: #191919; }
.dg-tree { width: 174px; padding-top: 4px; }
.dg-tree .sel { background: #303030; height: 28px; margin: 1px 0 0 3px; padding-left: 17px; }
.dg-vscroll { width: 25px; padding: 141px 0 0 8px; border-right: 3px solid #262626; }
.dg-vscroll i { display: block; width: 6px; height: 93px; background: #9a9a9a; }
.dg-list { flex: 1; display: flex; flex-direction: column; }
.cols, .item { display: grid; grid-template-columns: 340px 100px 180px 1fr; align-items: center; }
.cols { position: relative; height: 33px; margin-top: 1px; margin-bottom: 5px; color: #dedede; }
.cols span { height: 32px; line-height: 32px; padding-left: 7px; border-left: 1px solid #636363; }
.cols span:first-child { border: 0; padding-left: 38px; }
.sort { position: absolute; left: 180px; top: 0; }
.item { height: 41px; color: #dedede; }
.item span:first-child { display: flex; align-items: center; gap: 5px; padding-left: 24px; color: #fff; }
.item span + span { padding-left: 8px; }
.item span + span svg { margin-left: -1px; }
.item svg { margin-top: -3px; }
.dg-hscroll { display: flex; margin-top: auto; height: 21px; background: #161616; padding-left: 22px; }
.dg-hscroll i { width: 588px; height: 6px; margin-top: 8px; background: #9a9a9a; }
.dg-hscroll b { width: 112px; height: 1px; background: #000; }
.dg-form { display: grid; grid-template-columns: 151px 779px; column-gap: 6px; row-gap: 3px; padding-top: 13px; }
.dg-form label { text-align: right; line-height: 30px; height: 28px; }
.field { display: flex; align-items: center; justify-content: space-between; height: 28px; padding: 0 4px 0 3px; border: 1px solid #fff; color: #fff; }
.field svg { color: #c8c8c8; }
.field.type { background: #454545; border-color: #999; }
.field.type span { padding-top: 1px; }
.field mark { margin: -2px 0 0 3px; line-height: 21px; height: 20px; letter-spacing: -.04px; background: #0078d7; color: #fff; border-right: 1px solid #ff9a3c; }
.dg-foot { display: flex; align-items: center; padding: 33px 21px 0 14px; }
.dg-foot span { margin: 8px auto 0 8px; }
.hide { transform: scaleY(-1); color: #ddd; margin-top: 8px; }
.btn { width: 108px; height: 31px; margin-left: 17px; padding: 0; font: inherit; color: #fff; background: #333; border: 1px solid #999; border-radius: 4px; }
.save { border-color: #fff; }
.grip { position: absolute; right: 3px; bottom: 3px; }

/* taskbar */
.taskbar { display: flex; align-items: center; height: 60px; font-size: 14px; background: linear-gradient(90deg, #212327, #1c222c 5%, #242328 16%, #2a2023 22%, #22202a 35%, #2c1e24 43%, #301f23 55%, #391e22 65%, #331f23 78%, #2b2027 83%, #22242c); }
.apps { display: flex; align-items: center; margin-left: 742px; }
.start { margin-top: 1px; }
.pill { display: flex; align-items: center; gap: 6px; width: 125px; height: 40px; margin: 0 12px 0 17px; padding-left: 28px; border-radius: 20px; background: #382b31; border: 1px solid #41343a; font-size: 14px; }
.pill span { padding-top: 1px; }
.app { position: relative; display: grid; place-items: center; width: 50px; height: 50px; margin-right: 5px; border-radius: 5px; }
.app.run::after { content: ""; position: absolute; bottom: 1px; left: 21px; width: 8px; height: 4px; border-radius: 2px; background: #a39b9e; }
.app.active { background: #3b2a2f; border: 1px solid #45343a; }
.app.active::after { left: 14px; bottom: 0; width: 20px; background: #4cc2ff; }
.apps .pill + .app { margin-left: -5px; }
.tray { display: flex; align-items: center; margin-left: auto; padding-right: 25px; }
.tdbx { margin-left: 13px; }
.lang { width: 40px; margin-left: 15px; padding-top: 2px; text-align: center; }
.wifi { margin-left: 17px; }
.snd { margin-left: 9px; }
.bat { margin-left: 9px; }
.clock { width: 78px; margin-left: 9px; padding-top: 1px; text-align: right; white-space: nowrap; letter-spacing: -.35px; }
.note { width: 20px; height: 20px; margin-left: 10px; border-radius: 50%; background: #4cc2ff; color: #10222e; text-align: center; font-size: 13px; }
```
